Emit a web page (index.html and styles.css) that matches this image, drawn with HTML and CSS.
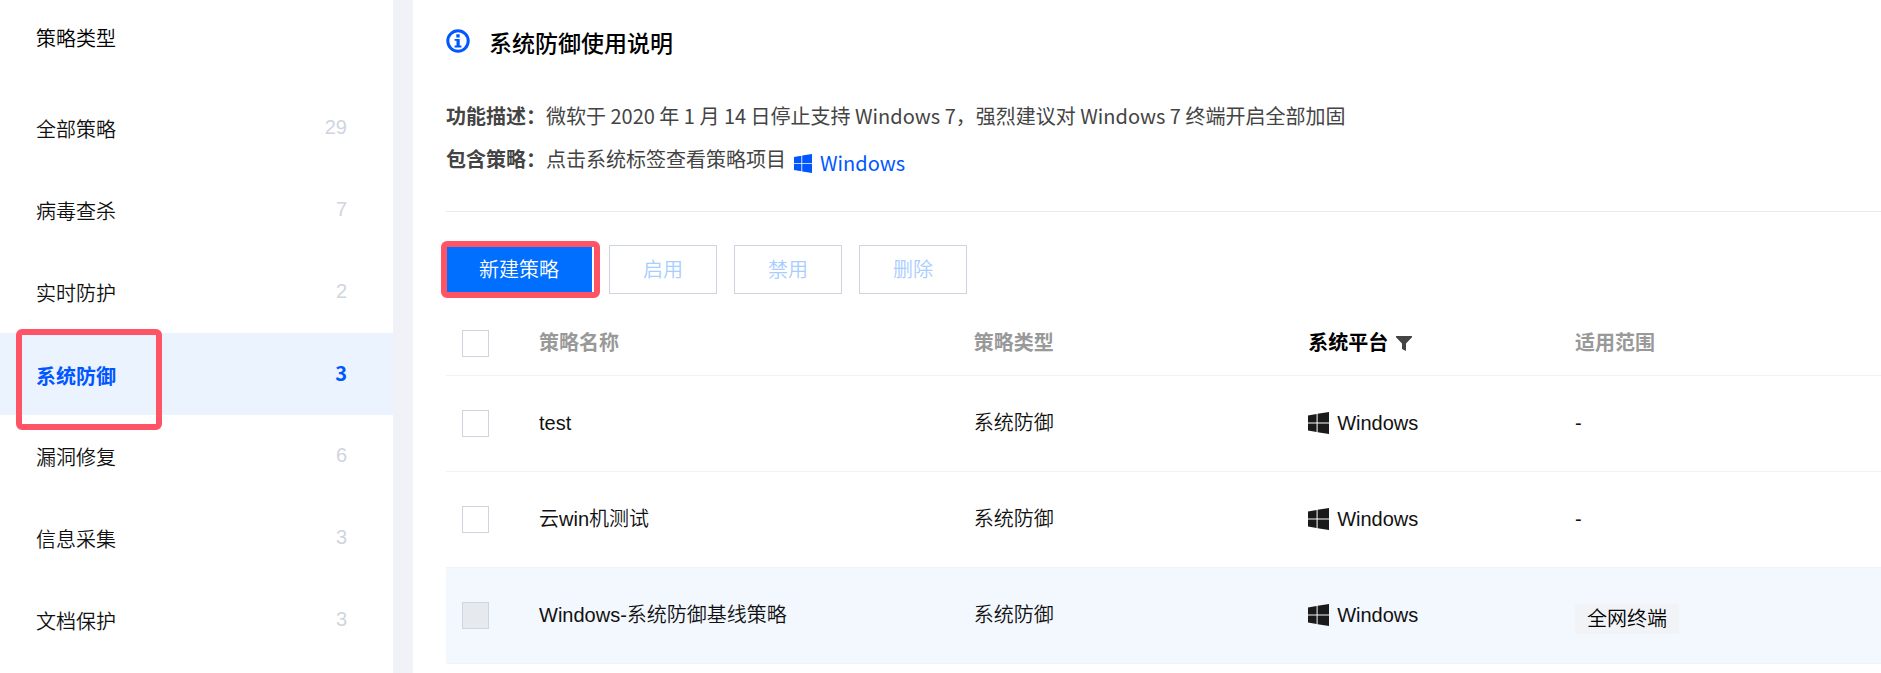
FILE: index.html
```html
<!DOCTYPE html>
<html lang="zh-CN">
<head>
<meta charset="utf-8">
<title>系统防御</title>
<link rel="stylesheet" href="styles.css">
</head>
<body>
<svg class="sprite" aria-hidden="true">
  <symbol id="windows" viewBox="0 0 21 22">
    <path d="M0 3.4 8.6 2v8.4H0zM9.6 1.8 21 0v10.4H9.600zM0 11.400h8.600V20L0 18.600zM9.600 11.400H21V22L9.600 20.200z"/>
  </symbol>
</svg>
<div class="layout">
  <aside class="sidebar">
    <h2 class="sidebar-title">策略类型</h2>
    <nav class="menu">
      <a class="item" href="#all"><span class="label">全部策略</span><span class="count">29</span></a>
      <a class="item" href="#virus"><span class="label">病毒查杀</span><span class="count">7</span></a>
      <a class="item" href="#realtime"><span class="label">实时防护</span><span class="count">2</span></a>
      <a class="item active" href="#system" aria-current="page"><span class="label">系统防御</span><span class="count">3</span><i class="mark mark-menu"></i></a>
      <a class="item" href="#leak"><span class="label">漏洞修复</span><span class="count">6</span></a>
      <a class="item" href="#info"><span class="label">信息采集</span><span class="count">3</span></a>
      <a class="item" href="#doc"><span class="label">文档保护</span><span class="count">3</span></a>
    </nav>
  </aside>
  <main class="main">
    <section class="intro">
      <h1 class="intro-title">
        <svg class="info" viewBox="0 0 24 24" aria-hidden="true"><circle cx="12" cy="12" r="10.200" fill="none" stroke="currentColor" stroke-width="3"/><path fill="currentColor" d="M10.300 5.300h3.400v3.200h-3.400zM8.600 9.900h5.100v6.700h1.700v1.800H8.600v-1.800h1.900v-4.900H8.600z"/></svg>
        <span>系统防御使用说明</span>
      </h1>
      <p class="line"><strong>功能描述：</strong>微软于 2020 年 1 月 14 日停止支持 Windows 7，强烈建议对 Windows 7 终端开启全部加固</p>
      <p class="line"><span><strong>包含策略：</strong>点击系统标签查看策略项目</span><a class="os-link" href="#windows-list"><svg class="os-small" aria-hidden="true"><use href="#windows"/></svg>Windows</a></p>
    </section>
    <div class="toolbar">
      <div class="primary-wrap"><button class="btn primary" type="button">新建策略</button><i class="mark mark-button"></i></div>
      <button class="btn" type="button" disabled>启用</button>
      <button class="btn" type="button" disabled>禁用</button>
      <button class="btn" type="button" disabled>删除</button>
    </div>
    <table class="table">
      <colgroup><col class="c-check"><col class="c-name"><col class="c-type"><col class="c-os"><col></colgroup>
      <thead>
        <tr>
          <th><input class="check" type="checkbox" aria-label="全选"></th>
          <th>策略名称</th>
          <th>策略类型</th>
          <th class="filtered"><span class="platform">系统平台<svg class="funnel" viewBox="0 0 16 15" aria-hidden="true"><path fill="currentColor" d="M0 0h16v1.200L10 7.500V15l-4-2V7.500L0 1.200z"/></svg></span></th>
          <th>适用范围</th>
        </tr>
      </thead>
      <tbody>
        <tr>
          <td><input class="check" type="checkbox" aria-label="test"></td>
          <td>test</td>
          <td>系统防御</td>
          <td><span class="platform"><svg class="os" aria-hidden="true"><use href="#windows"/></svg>Windows</span></td>
          <td>-</td>
        </tr>
        <tr>
          <td><input class="check" type="checkbox" aria-label="云win机测试"></td>
          <td>云win机测试</td>
          <td>系统防御</td>
          <td><span class="platform"><svg class="os" aria-hidden="true"><use href="#windows"/></svg>Windows</span></td>
          <td>-</td>
        </tr>
        <tr class="base">
          <td><input class="check" type="checkbox" disabled aria-label="Windows-系统防御基线策略"></td>
          <td>Windows-系统防御基线策略</td>
          <td>系统防御</td>
          <td><span class="platform"><svg class="os" aria-hidden="true"><use href="#windows"/></svg>Windows</span></td>
          <td><span class="tag">全网终端</span></td>
        </tr>
      </tbody>
    </table>
  </main>
</div>
</body>
</html>
```
FILE: styles.css
```css
* { box-sizing: border-box; }

body {
  margin: 0;
  background: #fff;
  color: #111;
  font: 350 20px/30px "Liberation Sans", "Noto Sans CJK SC", sans-serif;
}

.sprite { display: none; }

.layout {
  display: flex;
  min-height: 100vh;
}

.sidebar {
  flex: none;
  width: 413px;
  border-right: 20px solid #f0f2f7;
}

.sidebar-title {
  margin: 0;
  padding: 24px 36px 33px;
  color: #000;
  font-size: 20px;
  font-weight: 350;
}

.item {
  position: relative;
  display: flex;
  align-items: center;
  justify-content: space-between;
  height: 82px;
  padding: 0 46px 0 36px;
  color: inherit;
  text-decoration: none;
}

.label { padding-top: 4px; }

.count {
  padding-bottom: 2px;
  color: #cfd5e0;
  font-weight: 400;
}

.active { background: #ebf3ff; }

.active,
.active .count {
  color: #0056ff;
  font-family: "Noto Sans CJK SC", sans-serif;
  font-weight: 700;
}

.mark {
  position: absolute;
  border: 6px solid #ff5466;
  border-radius: 6px;
  pointer-events: none;
}

.mark-menu {
  top: -4px;
  left: 16px;
  width: 146px;
  height: 101px;
}

.main {
  flex: 1;
  min-width: 0;
  padding-left: 33px;
}

.intro {
  padding: 24px 0 30px;
  border-bottom: 1px solid #ebebeb;
  color: #444;
  font-family: "Noto Sans CJK SC", sans-serif;
  font-weight: 400;
}

.intro-title {
  display: flex;
  align-items: flex-start;
  gap: 19px;
  margin: 0 0 35px;
  color: #000;
  font-size: 23px;
  font-weight: 500;
  line-height: 36px;
}

.info {
  width: 24px;
  height: 24px;
  margin-top: 5px;
  color: #0056ff;
}

.line {
  height: 43px;
  margin: 0;
  line-height: 42px;
}

.os-link {
  display: inline-flex;
  align-items: center;
  gap: 8px;
  margin-left: 8px;
  padding-top: 4px;
  vertical-align: top;
  color: #0056ff;
  text-decoration: none;
}

.os-small { width: 18px; height: 19px; fill: currentColor; }

.toolbar {
  display: flex;
  gap: 17px;
  padding: 33px 0 18px;
}

.primary-wrap { position: relative; }

.btn {
  height: 49px;
  padding: 0 33px;
  border: 1px solid #cfd5e0;
  background: #fff;
  color: #a8cdff;
  font: inherit;
}

.primary {
  padding: 0 32px;
  border-color: #006eff;
  background: #006eff;
  color: #fff;
}

.mark-button { inset: -4px -8px -4px -5px; }

.table {
  width: 100%;
  border-collapse: collapse;
  table-layout: fixed;
}

.c-check { width: 93px; }
.c-name { width: 30.3%; }
.c-type { width: 23.3%; }
.c-os { width: 18.6%; }

th, td {
  padding: 0;
  border-bottom: 1px solid #f0f2f5;
  text-align: left;
}

th {
  height: 63px;
  color: #999;
  font-weight: 700;
}

td { height: 96px; }

.filtered { color: #000; }

.base td { background: #f3f8ff; }

.check {
  display: block;
  appearance: none;
  width: 27px;
  height: 27px;
  margin: 0 0 0 16px;
  border: 1px solid #cfd5e0;
  background: #fff;
}

.check:disabled { background: #e6eaef; }

.platform {
  display: flex;
  align-items: center;
  gap: 8px;
}

.os { width: 21px; height: 22px; fill: #1a1a1a; }

.funnel { width: 16px; height: 15px; color: #444; }

.tag {
  display: inline-block;
  margin-top: 8px;
  padding: 0 12px;
  background: #f2f3f7;
  color: #000;
}
```
